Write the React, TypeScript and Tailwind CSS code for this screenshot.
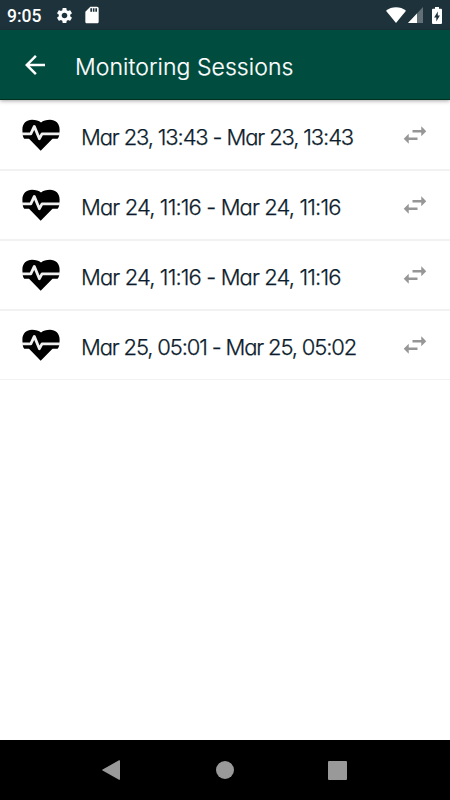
import { MdArrowBack, MdSdCard, MdSettings, MdSwapHoriz } from "react-icons/md";

interface Session {
  id: number;
  label: string;
  tracking: string;
}

const sessions: Session[] = [
  { id: 1, label: "Mar 23, 13:43 - Mar 23, 13:43", tracking: "tracking-[-1.13px]" },
  { id: 2, label: "Mar 24, 11:16 - Mar 24, 11:16", tracking: "tracking-[-0.87px]" },
  { id: 3, label: "Mar 24, 11:16 - Mar 24, 11:16", tracking: "tracking-[-0.87px]" },
  { id: 4, label: "Mar 25, 05:01 - Mar 25, 05:02", tracking: "tracking-[-1.15px]" },
];

function StatusBar() {
  return (
    <div className="flex h-[30px] items-center bg-[#1e323c] pl-[7px] pr-[8px] text-white">
      <span className="mt-[2px] w-[48px] font-['Roboto',sans-serif] text-[17.5px] font-medium leading-[30px]">9:05</span>
      <MdSettings className="size-[19px]" />
      <MdSdCard className="ml-[8px] size-[20px]" />
      <svg className="ml-auto" width="20" height="16" viewBox="0 0 20 16" fill="white">
        <path d="M0 3.7C5.5-.9 14.5-.9 20 3.7L10 16z" />
      </svg>
      <svg className="ml-[2px]" width="15" height="16" viewBox="0 0 15 16" fill="white">
        <path d="M15 0v16H0z" opacity=".3" />
        <path d="M9 6.4V16H0z" />
      </svg>
      <svg className="ml-[9px]" width="10" height="17" viewBox="0 0 10 17">
        <path d="M3 0h4v1.7h2q1 0 1 1V16q0 1-1 1H1q-1 0-1-1V2.7q0-1 1-1h2z" fill="white" />
        <path d="M5.8 4.5v4h2.1L4.3 14.5v-4H2.1z" fill="#1e323c" />
      </svg>
    </div>
  );
}

function HeartPulse() {
  return (
    <svg className="shrink-0 blur-[0.7px]" width="38" height="32" viewBox="0 0 38 32">
      <path
        d="M18.7 31.7 7 19.8H2.2Q.4 18 .4 10.5C.4 4.5 4.500.8 10 .8c3.800 0 6.900.8 9 2.700C21.100 1.600 24.200.8 28 .8c5.500 0 9.600 3.700 9.600 9.700q0 7.500-2 9.300H30.500z"
        fill="black"
      />
      <path
        d="M0 14.900h8.800L12.300 7.400l5.100 12.300 2.600-4.800H38"
        fill="none"
        stroke="#f0f0f0"
        strokeWidth="2.800"
        strokeLinejoin="round"
      />
    </svg>
  );
}

function SessionRow({ session }: { session: Session }) {
  return (
    <li className="flex h-[70px] items-center border-b-2 border-[#f2f2f2] pl-[22px] pr-[20px] last:h-[69px] last:border-b">
      <HeartPulse />
      <span
        className={`ml-[21px] mt-[3px] whitespace-nowrap font-['Inter',sans-serif] text-[22px] font-light leading-[30px] text-[#0c1c2c] [-webkit-text-stroke:0.25px_#0c1c2c] [font-feature-settings:'cv11','calt'_0] ${session.tracking}`}
      >
        {session.label}
      </span>
      <MdSwapHoriz className="ml-auto size-[30px] shrink-0 text-[#969696]" />
    </li>
  );
}

function NavBar() {
  return (
    <div className="flex h-[60px] items-center bg-black pl-[102px]">
      <svg width="18" height="20" viewBox="0 0 18 20" fill="#999">
        <path d="M17 .3q1-.5 1 .7v18q0 1.2-1 .7L.6 10.6q-.9-.6 0-1.2z" />
      </svg>
      <div className="ml-[96px] size-[18px] rounded-full bg-[#999]" />
      <div className="ml-[94px] size-[19px] rounded-[1px] bg-[#999]" />
    </div>
  );
}

export default function App() {
  return (
    <div className="flex h-screen w-full flex-col overflow-hidden bg-white">
      <StatusBar />
      <header className="relative flex h-[70px] items-center border-b border-[#003020] bg-[#004d40] pl-[20px] text-white shadow-[0_1px_4px_rgba(0,0,0,0.35)]">
        <MdArrowBack className="mt-px size-[30px]" />
        <h1 className="ml-[25px] mt-[4px] whitespace-nowrap font-['Inter',sans-serif] text-[23px] font-light leading-[32px] tracking-[0.06px] [-webkit-text-stroke:0.2px_white]">
          Monitoring Sessions
        </h1>
      </header>
      <ul className="flex-1 pt-px">
        {sessions.map((s) => (
          <SessionRow key={s.id} session={s} />
        ))}
      </ul>
      <NavBar />
    </div>
  );
}
